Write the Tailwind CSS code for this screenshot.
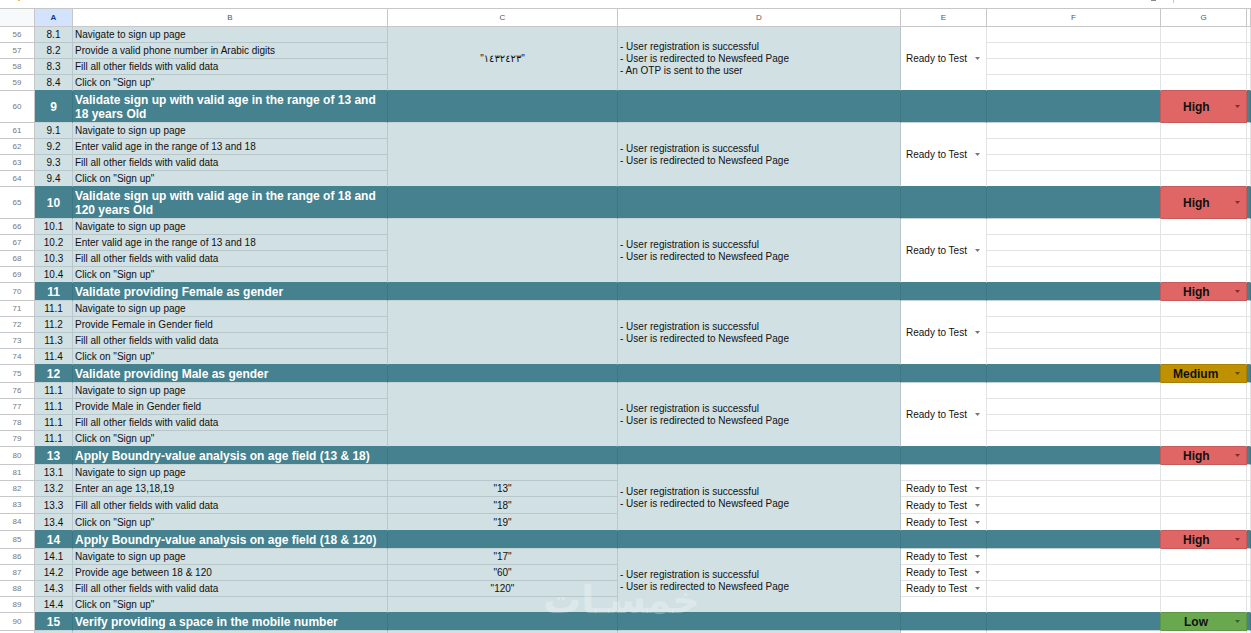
<!DOCTYPE html>
<html><head><meta charset="utf-8"><script src="https://cdn.jsdelivr.net/npm/@tailwindcss/browser@4"></script></head>
<body class="bg-white">
<div class="relative w-[1251px] h-[633px] overflow-hidden bg-white font-['Liberation_Sans','DejaVu_Sans',sans-serif] text-[10px] text-[#111]">
<div class="relative h-[9px] border-b border-[#c7c7c7]">
<div class="absolute left-[18px] top-0 w-[2px] h-[1px] bg-[#f0b64a]"></div>
<div class="absolute left-[1151px] top-0 w-[5px] h-[1px] bg-[#888]"></div>
<div class="absolute left-[1173px] top-0 w-[1px] h-[3px] bg-[#c7c7c7]"></div>
</div>
<div class="grid grid-cols-[35px_38px_315px_230px_283px_86px_174px_86px_4px] grid-rows-[18px_16px_16px_16px_16px_32px_16px_16px_16px_16px_32px_16px_16px_16px_16px_18px_16px_16px_16px_16px_18px_16px_16px_16px_16px_18px_16px_16px_17px_17px_18px_16px_16px_16px_16px_18px_2px] [&>div]:flex [&>div]:items-center [&>div]:min-w-0 [&>div]:overflow-hidden [&>div]:whitespace-nowrap [&>div]:border-r [&>div]:border-b">

<div class="bg-[#f8f9fa] border-[#c7c7c7] border-r-2 border-b-2"></div>
<div class="justify-center bg-[#d3e3fd] text-[8px] font-bold text-[#0b3a8c] border-[#c7c7c7]">A</div>
<div class="justify-center text-[8px] text-[#555] border-[#c7c7c7]">B</div>
<div class="justify-center text-[8px] text-[#555] border-[#c7c7c7]">C</div>
<div class="justify-center text-[8px] text-[#555] border-[#c7c7c7]">D</div>
<div class="justify-center text-[8px] text-[#555] border-[#c7c7c7]">E</div>
<div class="justify-center text-[8px] text-[#555] border-[#c7c7c7]">F</div>
<div class="justify-center text-[8px] text-[#555] border-[#c7c7c7]">G</div>
<div class="border-[#c7c7c7]"></div>

<!-- 56-59 -->
<div class="justify-center text-[8px] text-[#777] border-[#c7c7c7]">56</div><div class="justify-center bg-[#d0e0e3] border-[#b7c7cb]">8.1</div><div class="pl-[2px] bg-[#d0e0e3] border-[#b7c7cb]">Navigate to sign up page</div>
<div class="row-span-4 justify-center bg-[#d0e0e3] border-[#b7c7cb] border-b-[#45818e]">"١٤٣٢٤٢٣"</div>
<div class="row-span-4 pl-[2px] bg-[#d0e0e3] border-[#b7c7cb] border-b-[#45818e] leading-[12px]"><p>- User registration is successful<br>- User is redirected to Newsfeed Page<br>- An OTP is sent to the user</p></div>
<div class="row-span-4 justify-between pl-[5px] pr-[6px] border-[#e2e3e3] border-b-[#45818e]"><span>Ready to Test</span><svg class="w-[5px] h-[3px]" viewBox="0 0 7 4"><path d="M0 0h7L3.500 4z" fill="#777"/></svg></div>
<div class="border-[#e2e3e3]"></div><div class="border-[#e2e3e3]"></div><div class="border-[#e2e3e3]"></div>
<div class="justify-center text-[8px] text-[#777] border-[#c7c7c7]">57</div><div class="justify-center bg-[#d0e0e3] border-[#b7c7cb]">8.2</div><div class="pl-[2px] bg-[#d0e0e3] border-[#b7c7cb]">Provide a valid phone number in Arabic digits</div>
<div class="border-[#e2e3e3]"></div><div class="border-[#e2e3e3]"></div><div class="border-[#e2e3e3]"></div>
<div class="justify-center text-[8px] text-[#777] border-[#c7c7c7]">58</div><div class="justify-center bg-[#d0e0e3] border-[#b7c7cb]">8.3</div><div class="pl-[2px] bg-[#d0e0e3] border-[#b7c7cb]">Fill all other fields with valid data</div>
<div class="border-[#e2e3e3]"></div><div class="border-[#e2e3e3]"></div><div class="border-[#e2e3e3]"></div>
<div class="justify-center text-[8px] text-[#777] border-[#c7c7c7]">59</div><div class="justify-center bg-[#d0e0e3] border-[#b7c7cb] border-b-[#45818e]">8.4</div><div class="pl-[2px] bg-[#d0e0e3] border-[#b7c7cb] border-b-[#45818e]">Click on "Sign up"</div>
<div class="border-[#e2e3e3] border-b-[#45818e]"></div><div class="border-[#e2e3e3] border-b-[#c75a5a]"></div><div class="border-[#e2e3e3] border-b-[#45818e]"></div>

<!-- 60 -->
<div class="justify-center text-[8px] text-[#777] border-[#c7c7c7]">60</div><div class="justify-center bg-[#45818e] border-[#3f7683] border-b-[#c3d3d6] text-[12px] font-bold text-white">9</div><div class="pl-[2px] bg-[#45818e] border-[#3f7683] border-b-[#c3d3d6] text-[12px] font-bold text-white leading-[14px] !whitespace-normal">Validate sign up with valid age in the range of 13 and 18 years Old</div>
<div class="bg-[#45818e] border-[#3f7683] border-b-[#c3d3d6]"></div><div class="bg-[#45818e] border-[#3f7683] border-b-[#c3d3d6]"></div><div class="bg-[#45818e] border-[#3f7683] border-b-[#c3d3d6]"></div><div class="bg-[#45818e] border-[#c75a5a] border-b-[#c3d3d6]"></div>
<div class="justify-between pl-[22px] pr-[6px] bg-[#e06666] border-[#c75a5a] text-[12px] font-bold"><span>High</span><svg class="w-[5px] h-[3px]" viewBox="0 0 7 4"><path d="M0 0h7L3.500 4z" fill="#7a2e2e"/></svg></div>
<div class="bg-[#45818e] border-[#3f7683] border-b-[#c3d3d6]"></div>

<!-- 61-64 -->
<div class="justify-center text-[8px] text-[#777] border-[#c7c7c7]">61</div><div class="justify-center bg-[#d0e0e3] border-[#b7c7cb]">9.1</div><div class="pl-[2px] bg-[#d0e0e3] border-[#b7c7cb]">Navigate to sign up page</div>
<div class="row-span-4 bg-[#d0e0e3] border-[#b7c7cb] border-b-[#45818e]"></div>
<div class="row-span-4 pl-[2px] bg-[#d0e0e3] border-[#b7c7cb] border-b-[#45818e] leading-[12px]"><p>- User registration is successful<br>- User is redirected to Newsfeed Page</p></div>
<div class="row-span-4 justify-between pl-[5px] pr-[6px] border-[#e2e3e3] border-b-[#45818e]"><span>Ready to Test</span><svg class="w-[5px] h-[3px]" viewBox="0 0 7 4"><path d="M0 0h7L3.500 4z" fill="#777"/></svg></div>
<div class="border-[#e2e3e3]"></div><div class="border-[#e2e3e3]"></div><div class="border-[#e2e3e3]"></div>
<div class="justify-center text-[8px] text-[#777] border-[#c7c7c7]">62</div><div class="justify-center bg-[#d0e0e3] border-[#b7c7cb]">9.2</div><div class="pl-[2px] bg-[#d0e0e3] border-[#b7c7cb]">Enter valid age in the range of 13 and 18</div>
<div class="border-[#e2e3e3]"></div><div class="border-[#e2e3e3]"></div><div class="border-[#e2e3e3]"></div>
<div class="justify-center text-[8px] text-[#777] border-[#c7c7c7]">63</div><div class="justify-center bg-[#d0e0e3] border-[#b7c7cb]">9.3</div><div class="pl-[2px] bg-[#d0e0e3] border-[#b7c7cb]">Fill all other fields with valid data</div>
<div class="border-[#e2e3e3]"></div><div class="border-[#e2e3e3]"></div><div class="border-[#e2e3e3]"></div>
<div class="justify-center text-[8px] text-[#777] border-[#c7c7c7]">64</div><div class="justify-center bg-[#d0e0e3] border-[#b7c7cb] border-b-[#45818e]">9.4</div><div class="pl-[2px] bg-[#d0e0e3] border-[#b7c7cb] border-b-[#45818e]">Click on "Sign up"</div>
<div class="border-[#e2e3e3] border-b-[#45818e]"></div><div class="border-[#e2e3e3] border-b-[#c75a5a]"></div><div class="border-[#e2e3e3] border-b-[#45818e]"></div>

<!-- 65 -->
<div class="justify-center text-[8px] text-[#777] border-[#c7c7c7]">65</div><div class="justify-center bg-[#45818e] border-[#3f7683] border-b-[#c3d3d6] text-[12px] font-bold text-white">10</div><div class="pl-[2px] bg-[#45818e] border-[#3f7683] border-b-[#c3d3d6] text-[12px] font-bold text-white leading-[14px] !whitespace-normal">Validate sign up with valid age in the range of 18 and 120 years Old</div>
<div class="bg-[#45818e] border-[#3f7683] border-b-[#c3d3d6]"></div><div class="bg-[#45818e] border-[#3f7683] border-b-[#c3d3d6]"></div><div class="bg-[#45818e] border-[#3f7683] border-b-[#c3d3d6]"></div><div class="bg-[#45818e] border-[#c75a5a] border-b-[#c3d3d6]"></div>
<div class="justify-between pl-[22px] pr-[6px] bg-[#e06666] border-[#c75a5a] text-[12px] font-bold"><span>High</span><svg class="w-[5px] h-[3px]" viewBox="0 0 7 4"><path d="M0 0h7L3.500 4z" fill="#7a2e2e"/></svg></div>
<div class="bg-[#45818e] border-[#3f7683] border-b-[#c3d3d6]"></div>

<!-- 66-69 -->
<div class="justify-center text-[8px] text-[#777] border-[#c7c7c7]">66</div><div class="justify-center bg-[#d0e0e3] border-[#b7c7cb]">10.1</div><div class="pl-[2px] bg-[#d0e0e3] border-[#b7c7cb]">Navigate to sign up page</div>
<div class="row-span-4 bg-[#d0e0e3] border-[#b7c7cb] border-b-[#45818e]"></div>
<div class="row-span-4 pl-[2px] bg-[#d0e0e3] border-[#b7c7cb] border-b-[#45818e] leading-[12px]"><p>- User registration is successful<br>- User is redirected to Newsfeed Page</p></div>
<div class="row-span-4 justify-between pl-[5px] pr-[6px] border-[#e2e3e3] border-b-[#45818e]"><span>Ready to Test</span><svg class="w-[5px] h-[3px]" viewBox="0 0 7 4"><path d="M0 0h7L3.500 4z" fill="#777"/></svg></div>
<div class="border-[#e2e3e3]"></div><div class="border-[#e2e3e3]"></div><div class="border-[#e2e3e3]"></div>
<div class="justify-center text-[8px] text-[#777] border-[#c7c7c7]">67</div><div class="justify-center bg-[#d0e0e3] border-[#b7c7cb]">10.2</div><div class="pl-[2px] bg-[#d0e0e3] border-[#b7c7cb]">Enter valid age in the range of 13 and 18</div>
<div class="border-[#e2e3e3]"></div><div class="border-[#e2e3e3]"></div><div class="border-[#e2e3e3]"></div>
<div class="justify-center text-[8px] text-[#777] border-[#c7c7c7]">68</div><div class="justify-center bg-[#d0e0e3] border-[#b7c7cb]">10.3</div><div class="pl-[2px] bg-[#d0e0e3] border-[#b7c7cb]">Fill all other fields with valid data</div>
<div class="border-[#e2e3e3]"></div><div class="border-[#e2e3e3]"></div><div class="border-[#e2e3e3]"></div>
<div class="justify-center text-[8px] text-[#777] border-[#c7c7c7]">69</div><div class="justify-center bg-[#d0e0e3] border-[#b7c7cb] border-b-[#45818e]">10.4</div><div class="pl-[2px] bg-[#d0e0e3] border-[#b7c7cb] border-b-[#45818e]">Click on "Sign up"</div>
<div class="border-[#e2e3e3] border-b-[#45818e]"></div><div class="border-[#e2e3e3] border-b-[#c75a5a]"></div><div class="border-[#e2e3e3] border-b-[#45818e]"></div>

<!-- 70 -->
<div class="justify-center text-[8px] text-[#777] border-[#c7c7c7]">70</div><div class="justify-center bg-[#45818e] border-[#3f7683] border-b-[#c3d3d6] text-[12px] font-bold text-white">11</div><div class="pl-[2px] bg-[#45818e] border-[#3f7683] border-b-[#c3d3d6] text-[12px] font-bold text-white">Validate providing Female as gender</div>
<div class="bg-[#45818e] border-[#3f7683] border-b-[#c3d3d6]"></div><div class="bg-[#45818e] border-[#3f7683] border-b-[#c3d3d6]"></div><div class="bg-[#45818e] border-[#3f7683] border-b-[#c3d3d6]"></div><div class="bg-[#45818e] border-[#c75a5a] border-b-[#c3d3d6]"></div>
<div class="justify-between pl-[22px] pr-[6px] bg-[#e06666] border-[#c75a5a] text-[12px] font-bold"><span>High</span><svg class="w-[5px] h-[3px]" viewBox="0 0 7 4"><path d="M0 0h7L3.500 4z" fill="#7a2e2e"/></svg></div>
<div class="bg-[#45818e] border-[#3f7683] border-b-[#c3d3d6]"></div>

<!-- 71-74 -->
<div class="justify-center text-[8px] text-[#777] border-[#c7c7c7]">71</div><div class="justify-center bg-[#d0e0e3] border-[#b7c7cb]">11.1</div><div class="pl-[2px] bg-[#d0e0e3] border-[#b7c7cb]">Navigate to sign up page</div>
<div class="row-span-4 bg-[#d0e0e3] border-[#b7c7cb] border-b-[#45818e]"></div>
<div class="row-span-4 pl-[2px] bg-[#d0e0e3] border-[#b7c7cb] border-b-[#45818e] leading-[12px]"><p>- User registration is successful<br>- User is redirected to Newsfeed Page</p></div>
<div class="row-span-4 justify-between pl-[5px] pr-[6px] border-[#e2e3e3] border-b-[#45818e]"><span>Ready to Test</span><svg class="w-[5px] h-[3px]" viewBox="0 0 7 4"><path d="M0 0h7L3.500 4z" fill="#777"/></svg></div>
<div class="border-[#e2e3e3]"></div><div class="border-[#e2e3e3]"></div><div class="border-[#e2e3e3]"></div>
<div class="justify-center text-[8px] text-[#777] border-[#c7c7c7]">72</div><div class="justify-center bg-[#d0e0e3] border-[#b7c7cb]">11.2</div><div class="pl-[2px] bg-[#d0e0e3] border-[#b7c7cb]">Provide Female in Gender field</div>
<div class="border-[#e2e3e3]"></div><div class="border-[#e2e3e3]"></div><div class="border-[#e2e3e3]"></div>
<div class="justify-center text-[8px] text-[#777] border-[#c7c7c7]">73</div><div class="justify-center bg-[#d0e0e3] border-[#b7c7cb]">11.3</div><div class="pl-[2px] bg-[#d0e0e3] border-[#b7c7cb]">Fill all other fields with valid data</div>
<div class="border-[#e2e3e3]"></div><div class="border-[#e2e3e3]"></div><div class="border-[#e2e3e3]"></div>
<div class="justify-center text-[8px] text-[#777] border-[#c7c7c7]">74</div><div class="justify-center bg-[#d0e0e3] border-[#b7c7cb] border-b-[#45818e]">11.4</div><div class="pl-[2px] bg-[#d0e0e3] border-[#b7c7cb] border-b-[#45818e]">Click on "Sign up"</div>
<div class="border-[#e2e3e3] border-b-[#45818e]"></div><div class="border-[#e2e3e3] border-b-[#a88000]"></div><div class="border-[#e2e3e3] border-b-[#45818e]"></div>

<!-- 75 -->
<div class="justify-center text-[8px] text-[#777] border-[#c7c7c7]">75</div><div class="justify-center bg-[#45818e] border-[#3f7683] border-b-[#c3d3d6] text-[12px] font-bold text-white">12</div><div class="pl-[2px] bg-[#45818e] border-[#3f7683] border-b-[#c3d3d6] text-[12px] font-bold text-white">Validate providing Male as gender</div>
<div class="bg-[#45818e] border-[#3f7683] border-b-[#c3d3d6]"></div><div class="bg-[#45818e] border-[#3f7683] border-b-[#c3d3d6]"></div><div class="bg-[#45818e] border-[#3f7683] border-b-[#c3d3d6]"></div><div class="bg-[#45818e] border-[#a88000] border-b-[#c3d3d6]"></div>
<div class="justify-between pl-[12px] pr-[6px] bg-[#bf9000] border-[#a88000] text-[12px] font-bold"><span>Medium</span><svg class="w-[5px] h-[3px]" viewBox="0 0 7 4"><path d="M0 0h7L3.500 4z" fill="#5c4a10"/></svg></div>
<div class="bg-[#45818e] border-[#3f7683] border-b-[#c3d3d6]"></div>

<!-- 76-79 -->
<div class="justify-center text-[8px] text-[#777] border-[#c7c7c7]">76</div><div class="justify-center bg-[#d0e0e3] border-[#b7c7cb]">11.1</div><div class="pl-[2px] bg-[#d0e0e3] border-[#b7c7cb]">Navigate to sign up page</div>
<div class="row-span-4 bg-[#d0e0e3] border-[#b7c7cb] border-b-[#45818e]"></div>
<div class="row-span-4 pl-[2px] bg-[#d0e0e3] border-[#b7c7cb] border-b-[#45818e] leading-[12px]"><p>- User registration is successful<br>- User is redirected to Newsfeed Page</p></div>
<div class="row-span-4 justify-between pl-[5px] pr-[6px] border-[#e2e3e3] border-b-[#45818e]"><span>Ready to Test</span><svg class="w-[5px] h-[3px]" viewBox="0 0 7 4"><path d="M0 0h7L3.500 4z" fill="#777"/></svg></div>
<div class="border-[#e2e3e3]"></div><div class="border-[#e2e3e3]"></div><div class="border-[#e2e3e3]"></div>
<div class="justify-center text-[8px] text-[#777] border-[#c7c7c7]">77</div><div class="justify-center bg-[#d0e0e3] border-[#b7c7cb]">11.1</div><div class="pl-[2px] bg-[#d0e0e3] border-[#b7c7cb]">Provide Male in Gender field</div>
<div class="border-[#e2e3e3]"></div><div class="border-[#e2e3e3]"></div><div class="border-[#e2e3e3]"></div>
<div class="justify-center text-[8px] text-[#777] border-[#c7c7c7]">78</div><div class="justify-center bg-[#d0e0e3] border-[#b7c7cb]">11.1</div><div class="pl-[2px] bg-[#d0e0e3] border-[#b7c7cb]">Fill all other fields with valid data</div>
<div class="border-[#e2e3e3]"></div><div class="border-[#e2e3e3]"></div><div class="border-[#e2e3e3]"></div>
<div class="justify-center text-[8px] text-[#777] border-[#c7c7c7]">79</div><div class="justify-center bg-[#d0e0e3] border-[#b7c7cb] border-b-[#45818e]">11.1</div><div class="pl-[2px] bg-[#d0e0e3] border-[#b7c7cb] border-b-[#45818e]">Click on "Sign up"</div>
<div class="border-[#e2e3e3] border-b-[#45818e]"></div><div class="border-[#e2e3e3] border-b-[#c75a5a]"></div><div class="border-[#e2e3e3] border-b-[#45818e]"></div>

<!-- 80 -->
<div class="justify-center text-[8px] text-[#777] border-[#c7c7c7]">80</div><div class="justify-center bg-[#45818e] border-[#3f7683] border-b-[#c3d3d6] text-[12px] font-bold text-white">13</div><div class="pl-[2px] bg-[#45818e] border-[#3f7683] border-b-[#c3d3d6] text-[12px] font-bold text-white">Apply Boundry-value analysis on age field (13 &amp; 18)</div>
<div class="bg-[#45818e] border-[#3f7683] border-b-[#c3d3d6]"></div><div class="bg-[#45818e] border-[#3f7683] border-b-[#c3d3d6]"></div><div class="bg-[#45818e] border-[#3f7683] border-b-[#c3d3d6]"></div><div class="bg-[#45818e] border-[#c75a5a] border-b-[#c3d3d6]"></div>
<div class="justify-between pl-[22px] pr-[6px] bg-[#e06666] border-[#c75a5a] text-[12px] font-bold"><span>High</span><svg class="w-[5px] h-[3px]" viewBox="0 0 7 4"><path d="M0 0h7L3.500 4z" fill="#7a2e2e"/></svg></div>
<div class="bg-[#45818e] border-[#3f7683] border-b-[#c3d3d6]"></div>

<!-- 81-84 -->
<div class="justify-center text-[8px] text-[#777] border-[#c7c7c7]">81</div><div class="justify-center bg-[#d0e0e3] border-[#b7c7cb]">13.1</div><div class="pl-[2px] bg-[#d0e0e3] border-[#b7c7cb]">Navigate to sign up page</div>
<div class="bg-[#d0e0e3] border-[#b7c7cb]"></div>
<div class="row-span-4 pl-[2px] bg-[#d0e0e3] border-[#b7c7cb] border-b-[#45818e] leading-[12px]"><p>- User registration is successful<br>- User is redirected to Newsfeed Page</p></div>
<div class="border-[#e2e3e3]"></div>
<div class="border-[#e2e3e3]"></div><div class="border-[#e2e3e3]"></div><div class="border-[#e2e3e3]"></div>
<div class="justify-center text-[8px] text-[#777] border-[#c7c7c7]">82</div><div class="justify-center bg-[#d0e0e3] border-[#b7c7cb]">13.2</div><div class="pl-[2px] bg-[#d0e0e3] border-[#b7c7cb]">Enter an age 13,18,19</div>
<div class="justify-center bg-[#d0e0e3] border-[#b7c7cb]">"13"</div>
<div class="justify-between pl-[5px] pr-[6px] border-[#e2e3e3]"><span>Ready to Test</span><svg class="w-[5px] h-[3px]" viewBox="0 0 7 4"><path d="M0 0h7L3.500 4z" fill="#777"/></svg></div>
<div class="border-[#e2e3e3]"></div><div class="border-[#e2e3e3]"></div><div class="border-[#e2e3e3]"></div>
<div class="justify-center text-[8px] text-[#777] border-[#c7c7c7]">83</div><div class="justify-center bg-[#d0e0e3] border-[#b7c7cb]">13.3</div><div class="pl-[2px] bg-[#d0e0e3] border-[#b7c7cb]">Fill all other fields with valid data</div>
<div class="justify-center bg-[#d0e0e3] border-[#b7c7cb]">"18"</div>
<div class="justify-between pl-[5px] pr-[6px] border-[#e2e3e3]"><span>Ready to Test</span><svg class="w-[5px] h-[3px]" viewBox="0 0 7 4"><path d="M0 0h7L3.500 4z" fill="#777"/></svg></div>
<div class="border-[#e2e3e3]"></div><div class="border-[#e2e3e3]"></div><div class="border-[#e2e3e3]"></div>
<div class="justify-center text-[8px] text-[#777] border-[#c7c7c7]">84</div><div class="justify-center bg-[#d0e0e3] border-[#b7c7cb] border-b-[#45818e]">13.4</div><div class="pl-[2px] bg-[#d0e0e3] border-[#b7c7cb] border-b-[#45818e]">Click on "Sign up"</div>
<div class="justify-center bg-[#d0e0e3] border-[#b7c7cb] border-b-[#45818e]">"19"</div>
<div class="justify-between pl-[5px] pr-[6px] border-[#e2e3e3] border-b-[#45818e]"><span>Ready to Test</span><svg class="w-[5px] h-[3px]" viewBox="0 0 7 4"><path d="M0 0h7L3.500 4z" fill="#777"/></svg></div>
<div class="border-[#e2e3e3] border-b-[#45818e]"></div><div class="border-[#e2e3e3] border-b-[#c75a5a]"></div><div class="border-[#e2e3e3] border-b-[#45818e]"></div>

<!-- 85 -->
<div class="justify-center text-[8px] text-[#777] border-[#c7c7c7]">85</div><div class="justify-center bg-[#45818e] border-[#3f7683] border-b-[#c3d3d6] text-[12px] font-bold text-white">14</div><div class="pl-[2px] bg-[#45818e] border-[#3f7683] border-b-[#c3d3d6] text-[12px] font-bold text-white">Apply Boundry-value analysis on age field (18 &amp; 120)</div>
<div class="bg-[#45818e] border-[#3f7683] border-b-[#c3d3d6]"></div><div class="bg-[#45818e] border-[#3f7683] border-b-[#c3d3d6]"></div><div class="bg-[#45818e] border-[#3f7683] border-b-[#c3d3d6]"></div><div class="bg-[#45818e] border-[#c75a5a] border-b-[#c3d3d6]"></div>
<div class="justify-between pl-[22px] pr-[6px] bg-[#e06666] border-[#c75a5a] text-[12px] font-bold"><span>High</span><svg class="w-[5px] h-[3px]" viewBox="0 0 7 4"><path d="M0 0h7L3.500 4z" fill="#7a2e2e"/></svg></div>
<div class="bg-[#45818e] border-[#3f7683] border-b-[#c3d3d6]"></div>

<!-- 86-89 -->
<div class="justify-center text-[8px] text-[#777] border-[#c7c7c7]">86</div><div class="justify-center bg-[#d0e0e3] border-[#b7c7cb]">14.1</div><div class="pl-[2px] bg-[#d0e0e3] border-[#b7c7cb]">Navigate to sign up page</div>
<div class="justify-center bg-[#d0e0e3] border-[#b7c7cb]">"17"</div>
<div class="row-span-4 pl-[2px] bg-[#d0e0e3] border-[#b7c7cb] border-b-[#45818e] leading-[12px]"><p>- User registration is successful<br>- User is redirected to Newsfeed Page</p></div>
<div class="justify-between pl-[5px] pr-[6px] border-[#e2e3e3]"><span>Ready to Test</span><svg class="w-[5px] h-[3px]" viewBox="0 0 7 4"><path d="M0 0h7L3.500 4z" fill="#777"/></svg></div>
<div class="border-[#e2e3e3]"></div><div class="border-[#e2e3e3]"></div><div class="border-[#e2e3e3]"></div>
<div class="justify-center text-[8px] text-[#777] border-[#c7c7c7]">87</div><div class="justify-center bg-[#d0e0e3] border-[#b7c7cb]">14.2</div><div class="pl-[2px] bg-[#d0e0e3] border-[#b7c7cb]">Provide age between 18 &amp; 120</div>
<div class="justify-center bg-[#d0e0e3] border-[#b7c7cb]">"60"</div>
<div class="justify-between pl-[5px] pr-[6px] border-[#e2e3e3]"><span>Ready to Test</span><svg class="w-[5px] h-[3px]" viewBox="0 0 7 4"><path d="M0 0h7L3.500 4z" fill="#777"/></svg></div>
<div class="border-[#e2e3e3]"></div><div class="border-[#e2e3e3]"></div><div class="border-[#e2e3e3]"></div>
<div class="justify-center text-[8px] text-[#777] border-[#c7c7c7]">88</div><div class="justify-center bg-[#d0e0e3] border-[#b7c7cb]">14.3</div><div class="pl-[2px] bg-[#d0e0e3] border-[#b7c7cb]">Fill all other fields with valid data</div>
<div class="justify-center bg-[#d0e0e3] border-[#b7c7cb]">"120"</div>
<div class="justify-between pl-[5px] pr-[6px] border-[#e2e3e3]"><span>Ready to Test</span><svg class="w-[5px] h-[3px]" viewBox="0 0 7 4"><path d="M0 0h7L3.500 4z" fill="#777"/></svg></div>
<div class="border-[#e2e3e3]"></div><div class="border-[#e2e3e3]"></div><div class="border-[#e2e3e3]"></div>
<div class="justify-center text-[8px] text-[#777] border-[#c7c7c7]">89</div><div class="justify-center bg-[#d0e0e3] border-[#b7c7cb] border-b-[#45818e]">14.4</div><div class="pl-[2px] bg-[#d0e0e3] border-[#b7c7cb] border-b-[#45818e]">Click on "Sign up"</div>
<div class="bg-[#d0e0e3] border-[#b7c7cb] border-b-[#45818e]"></div>
<div class="border-[#e2e3e3] border-b-[#45818e]"></div>
<div class="border-[#e2e3e3] border-b-[#45818e]"></div><div class="border-[#e2e3e3] border-b-[#5f9747]"></div><div class="border-[#e2e3e3] border-b-[#45818e]"></div>

<!-- 90 -->
<div class="justify-center text-[8px] text-[#777] border-[#c7c7c7]">90</div><div class="justify-center bg-[#45818e] border-[#3f7683] border-b-[#c3d3d6] text-[12px] font-bold text-white">15</div><div class="pl-[2px] bg-[#45818e] border-[#3f7683] border-b-[#c3d3d6] text-[12px] font-bold text-white">Verify providing a space in the mobile number</div>
<div class="bg-[#45818e] border-[#3f7683] border-b-[#c3d3d6]"></div><div class="bg-[#45818e] border-[#3f7683] border-b-[#c3d3d6]"></div><div class="bg-[#45818e] border-[#3f7683] border-b-[#c3d3d6]"></div><div class="bg-[#45818e] border-[#5f9747] border-b-[#c3d3d6]"></div>
<div class="justify-between pl-[23px] pr-[6px] bg-[#6aa84f] border-[#5f9747] text-[12px] font-bold"><span>Low</span><svg class="w-[5px] h-[3px]" viewBox="0 0 7 4"><path d="M0 0h7L3.500 4z" fill="#3c5e2c"/></svg></div>
<div class="bg-[#45818e] border-[#3f7683] border-b-[#c3d3d6]"></div>

<!-- 91 -->
<div class="border-[#c7c7c7] !border-b-0"></div><div class="bg-[#d0e0e3] border-[#b7c7cb] !border-b-0"></div><div class="bg-[#d0e0e3] border-[#b7c7cb] !border-b-0"></div><div class="bg-[#d0e0e3] border-[#b7c7cb] !border-b-0"></div><div class="bg-[#d0e0e3] border-[#b7c7cb] !border-b-0"></div><div class="border-[#e2e3e3] !border-b-0"></div><div class="border-[#e2e3e3] !border-b-0"></div><div class="border-[#e2e3e3] !border-b-0"></div><div class="border-[#e2e3e3] !border-b-0"></div>
</div>
<div class="absolute left-[550px] top-[578px] w-[150px] text-[38px] leading-[44px] font-bold text-white/30 font-['DejaVu_Sans',sans-serif] pointer-events-none" dir="rtl" lang="ar">خمسـات</div>
</div>
</body></html>
